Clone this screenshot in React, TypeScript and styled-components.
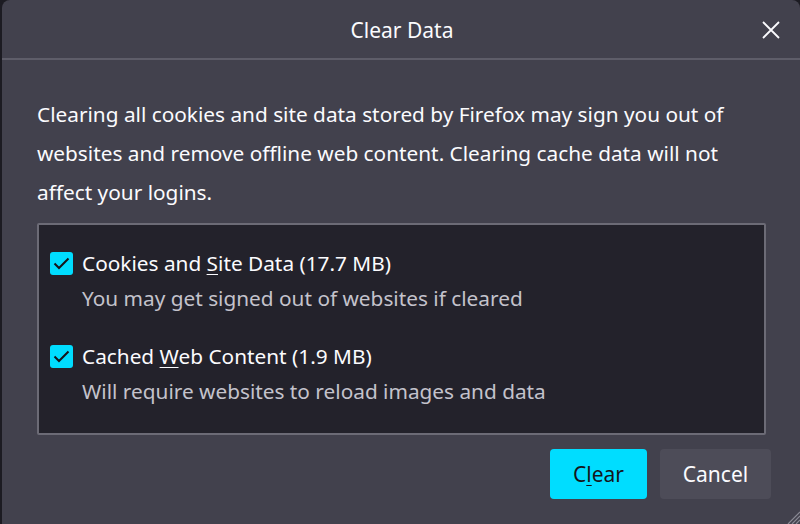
import React from "react";
import styled, { createGlobalStyle } from "styled-components";

const Global = createGlobalStyle`
  html, body { margin: 0; padding: 0; background: #1c1b22; overflow: hidden; }
  body { font-family: "Noto Sans", "Open Sans", sans-serif; }
  * { box-sizing: border-box; }
`;

const Page = styled.div`
  width: 800px;
  height: 524px;
  display: flex;
  padding-left: 2px;
`;

const Dialog = styled.div`
  position: relative;
  flex: 1;
  background: #42414d;
  border-radius: 8px 8px 0 0;
  color: #fbfbfe;
  display: flex;
  flex-direction: column;
`;

const Header = styled.div`
  height: 58px;
  display: flex;
  align-items: center;
  justify-content: center;
  position: relative;
  border-bottom: 2px solid #5e5d69;
  box-sizing: content-box;
`;

const Title = styled.h1`
  margin: 0;
  font-size: 21px;
  font-weight: 400;
  padding: 2px 0 0 2px;
`;

const CloseButton = styled.button`
  position: absolute;
  right: 14px;
  top: 15px;
  width: 30px;
  height: 30px;
  padding: 0;
  border: none;
  background: transparent;
  color: #fbfbfe;
  display: flex;
  align-items: center;
  justify-content: center;
`;

const Body = styled.div`
  padding: 35px 34px 0 35px;
  display: flex;
  flex-direction: column;
`;

const Description = styled.p`
  margin: 0;
  font-size: 20.8px;
  line-height: 39px;
`;

const OptionsBox = styled.div`
  margin-top: 11px;
  height: 212px;
  background: #23222b;
  border: 2px solid #6c6b76;
  border-radius: 2px;
  padding: 26px 11px 0;
  display: flex;
  flex-direction: column;
  gap: 34px;
`;

const Option = styled.div`
  display: grid;
  grid-template-columns: 23px 1fr;
  column-gap: 9px;
  row-gap: 11px;
  align-items: center;
`;

const Check = styled.span`
  width: 23px;
  height: 23px;
  border-radius: 3px;
  background: #00ddff;
  display: flex;
  align-items: center;
  justify-content: center;
`;

const Label = styled.span`
  font-size: 20.8px;
  line-height: 24px;
  color: #fbfbfe;
`;

const Sub = styled.span`
  grid-column: 2;
  font-size: 20.8px;
  line-height: 24px;
  color: #c4c3cc;
`;

const Key = styled.span`
  text-decoration: underline;
  text-underline-offset: 3px;
  text-decoration-thickness: 1px;
`;

const Footer = styled.div`
  display: flex;
  justify-content: flex-end;
  gap: 13px;
  padding-top: 14px;
  margin-right: -5px;
`;

const Button = styled.button<{ $primary?: boolean }>`
  height: 50px;
  width: ${(p) => (p.$primary ? "97px" : "111px")};
  border: none;
  border-radius: 4px;
  font-family: inherit;
  font-size: 21px;
  background: ${(p) => (p.$primary ? "#00ddff" : "#4d4c58")};
  color: ${(p) => (p.$primary ? "#15141a" : "#fbfbfe")};
  display: flex;
  align-items: center;
  justify-content: center;
`;

const Grip = styled.svg`
  position: absolute;
  right: 0;
  bottom: 0;
`;

const CheckMark = () => (
  <svg width="17" height="13" viewBox="0 0 17 13">
    <path d="M1.5 6.5 L6 11 L15.5 1.5" fill="none" stroke="#15141a" strokeWidth="2" />
  </svg>
);

export default function App() {
  return (
    <>
      <Global />
      <Page>
        <Dialog>
          <Header>
            <Title>Clear Data</Title>
            <CloseButton aria-label="Close">
              <svg width="18" height="18" viewBox="0 0 18 18">
                <path d="M1 1 L17 17 M17 1 L1 17" stroke="#fbfbfe" strokeWidth="1.8" fill="none" />
              </svg>
            </CloseButton>
          </Header>
          <Body>
            <Description>
              Clearing all cookies and site data stored by Firefox may sign you out of
              websites and remove offline web content. Clearing cache data will not
              affect your logins.
            </Description>
            <OptionsBox>
              <Option>
                <Check><CheckMark /></Check>
                <Label>Cookies and <Key>S</Key>ite Data (17.7 MB)</Label>
                <Sub>You may get signed out of websites if cleared</Sub>
              </Option>
              <Option>
                <Check><CheckMark /></Check>
                <Label>Cached <Key>W</Key>eb Content (1.9 MB)</Label>
                <Sub>Will require websites to reload images and data</Sub>
              </Option>
            </OptionsBox>
            <Footer>
              <Button $primary>C<Key>l</Key>ear</Button>
              <Button>Cancel</Button>
            </Footer>
          </Body>
          <Grip width="14" height="14" viewBox="0 0 14 14">
            <path d="M14 2 L2 14 M14 6 L6 14 M14 10 L10 14" stroke="#8a8994" strokeWidth="1.2" />
          </Grip>
        </Dialog>
      </Page>
    </>
  );
}
